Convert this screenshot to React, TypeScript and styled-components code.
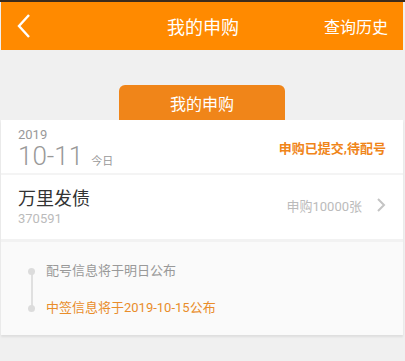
import React from 'react'
import styled, { createGlobalStyle } from 'styled-components'

const GlobalStyle = createGlobalStyle`
    html, body {
        margin: 0;
        padding: 0;
        background: #f0f0f0;
        font-family: Roboto, "Noto Sans CJK SC", sans-serif;
    }
`

const Page = styled.div`
    width: 405px;
    height: 361px;
    box-sizing: border-box;
    padding: 0 2px 0 1px;
    background: #f0f0f0;
    overflow: hidden;
`

const TopLine = styled.div`
    height: 2px;
    background: #3b2b1c;
    margin: 0 -2px 0 -1px;
`

const Header = styled.div`
    height: 48px;
    background: #ff8a00;
    display: grid;
    grid-template-columns: 80px 1fr 80px;
    align-items: center;
    color: #fff;
`

const BackButton = styled.div`
    display: flex;
    align-items: center;
    padding-left: 14px;
    height: 100%;
`

const HeaderTitle = styled.div`
    text-align: center;
    font-size: 18px;
    margin-left: 2px;
`

const HeaderAction = styled.div`
    text-align: right;
    font-size: 16px;
    padding-right: 15px;
`

const TabRow = styled.div`
    display: flex;
    justify-content: center;
    padding-top: 35px;
`

const Tab = styled.div`
    width: 166px;
    height: 35px;
    background: #f08519;
    border-radius: 6px 6px 0 0;
    color: #fff;
    font-size: 16px;
    display: flex;
    align-items: center;
    justify-content: center;
`

const Card = styled.div`
    background: #fff;
    box-shadow: 0 2px 2px rgba(0, 0, 0, 0.08);
`

const DateRow = styled.div`
    height: 53px;
    display: flex;
    align-items: center;
    justify-content: space-between;
    padding: 0 17px 0 17px;
    border-bottom: 2px solid #f4f4f4;
`

const DateBlock = styled.div`
    display: flex;
    flex-direction: column;
    color: #999;
`

const Year = styled.span`
    font-size: 13px;
    line-height: 14px;
    margin-top: 4px;
`

const DayLine = styled.div`
    display: flex;
    align-items: baseline;
`

const Day = styled.span`
    font-size: 26px;
    line-height: 28px;
    font-weight: 300;
`

const Today = styled.span`
    font-size: 11px;
    margin-left: 8px;
`

const Status = styled.span`
    color: #f08519;
    font-size: 13px;
    font-weight: bold;
    margin-top: 1px;
`

const BondRow = styled.div`
    height: 64px;
    display: flex;
    align-items: center;
    justify-content: space-between;
    padding: 0 17px;
    border-bottom: 3px solid #f2f2f2;
`

const BondInfo = styled.div`
    display: flex;
    flex-direction: column;
`

const BondName = styled.span`
    font-size: 18px;
    color: #333;
    line-height: 24px;
`

const BondCode = styled.span`
    font-size: 13px;
    color: #bbb;
    line-height: 16px;
`

const Amount = styled.div`
    display: flex;
    align-items: center;
    gap: 14px;
    color: #bbb;
    font-size: 13px;
    margin-top: -4px;
`

const Timeline = styled.div`
    background: #fafafa;
    padding: 21px 0 19px 27px;
    display: flex;
    flex-direction: column;
    gap: 21px;
    position: relative;
`

const TimelineRail = styled.div`
    position: absolute;
    left: 30px;
    top: 31px;
    height: 37px;
    width: 2px;
    background: #e0e0e0;
`

const Step = styled.div<{ $active?: boolean }>`
    display: flex;
    align-items: center;
    font-size: 13px;
    line-height: 16px;
    color: ${p => (p.$active ? '#e98d2a' : '#999')};
`

const Dot = styled.span`
    width: 7px;
    height: 7px;
    border-radius: 50%;
    background: #dcdcdc;
    margin-right: 11px;
    position: relative;
    z-index: 1;
`

const App: React.FC = () => {
    return (
        <Page>
            <GlobalStyle />
            <TopLine />
            <Header>
                <BackButton>
                    <svg width="18" height="26" viewBox="0 0 18 26">
                        <path d="M14 2 L4 13 L14 24" fill="none" stroke="#fff" strokeWidth="2.4" />
                    </svg>
                </BackButton>
                <HeaderTitle>我的申购</HeaderTitle>
                <HeaderAction>查询历史</HeaderAction>
            </Header>
            <TabRow>
                <Tab>我的申购</Tab>
            </TabRow>
            <Card>
                <DateRow>
                    <DateBlock>
                        <Year>2019</Year>
                        <DayLine>
                            <Day>10-11</Day>
                            <Today>今日</Today>
                        </DayLine>
                    </DateBlock>
                    <Status>申购已提交,待配号</Status>
                </DateRow>
                <BondRow>
                    <BondInfo>
                        <BondName>万里发债</BondName>
                        <BondCode>370591</BondCode>
                    </BondInfo>
                    <Amount>
                        申购10000张
                        <svg width="10" height="16" viewBox="0 0 10 16">
                            <path d="M2 2 L8 8 L2 14" fill="none" stroke="#c4c4c4" strokeWidth="2" />
                        </svg>
                    </Amount>
                </BondRow>
                <Timeline>
                    <TimelineRail />
                    <Step>
                        <Dot />
                        配号信息将于明日公布
                    </Step>
                    <Step $active>
                        <Dot />
                        中签信息将于2019-10-15公布
                    </Step>
                </Timeline>
            </Card>
        </Page>
    )
}

export default App
